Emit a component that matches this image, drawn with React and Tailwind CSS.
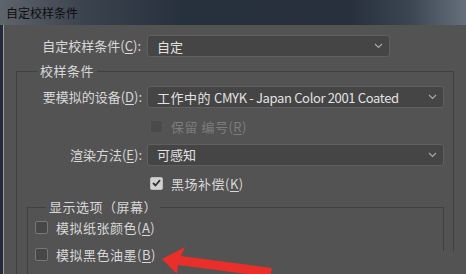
import React from "react";

const font = { fontFamily: '"Noto Sans CJK SC", "Noto Sans", sans-serif' };

function Chevron() {
  return (
    <svg width="9" height="6" viewBox="0 0 9 6" className="shrink-0">
      <polyline points="1,1 4.5,4.5 8,1" fill="none" stroke="#a8a8a8" strokeWidth="1.2" />
    </svg>
  );
}

function Select({ w, h = 22, children }) {
  return (
    <div
      className="flex items-center justify-between rounded-[3px] border border-[#5f5f5f] bg-[#454545] pl-[9px] pr-[6px] text-[13px] text-[#e2e2e2]"
      style={{ width: w, height: h }}
    >
      <span className="whitespace-nowrap leading-none">{children}</span>
      <Chevron />
    </div>
  );
}

function U({ children }) {
  return <span className="underline underline-offset-2">{children}</span>;
}

function Box({ checked, disabled }) {
  return (
    <div
      className={
        "flex h-[13px] w-[13px] shrink-0 items-center justify-center rounded-[2px] border " +
        (checked
          ? "border-[#bdbdbd] bg-[#d2d2d2]"
          : disabled
          ? "border-[#555555] bg-[#4a4a4a]"
          : "border-[#777777] bg-[#474747]")
      }
    >
      {checked && (
        <svg width="9" height="8" viewBox="0 0 9 8">
          <polyline points="1,4 3.5,6.5 8,1.2" fill="none" stroke="#333333" strokeWidth="1.8" />
        </svg>
      )}
    </div>
  );
}

export default function App() {
  return (
    <div className="relative h-[274px] w-[466px] overflow-hidden bg-[#232c38]" style={font}>
      {/* title bar */}
      <div className="flex h-[25px] items-center bg-[linear-gradient(to_right,#5e646c_0%,#3b434e_18%,#27303d_40%,#27303c_75%,#3c4653_88%,#66707b_100%)] pl-[6px]">
        <span className="text-[12px] leading-none text-[#0d0d0d]">自定校样条件</span>
      </div>
      <div className="flex h-[249px]">
        <div className="w-[3px] bg-[#222b37]" />
        <div className="flex flex-1 flex-col">
          <div className="h-[1px] bg-[#c4c8cc]" />
          <div className="flex flex-1">
            <div className="w-[1px] bg-[#9a9ea3]" />
            <div className="flex flex-1 flex-col bg-[#535353] pt-[10px] text-[13px] text-[#d8d8d8]">
              {/* Row 1 */}
              <div className="flex items-center">
                <div className="w-[138px] pr-[1px] text-right whitespace-nowrap">
                  自定校样条件(<U>C</U>):
                </div>
                <div className="ml-[5px]">
                  <Select w={243}>自定</Select>
                </div>
              </div>

              {/* outer group */}
              <fieldset className="ml-[12px] mt-[5px] w-[438px] border border-[#404040] pb-[30px]">
                <legend className="ml-[20px] px-[3px] leading-[18px] tracking-[0.5px]">校样条件</legend>
                <div className="mt-[6px] flex items-center">
                  <div className="w-[125px] text-right whitespace-nowrap">
                    要模拟的设备(<U>D</U>):
                  </div>
                  <div className="ml-[5px]">
                    <Select w={297} h={22}>
                      <span className="tracking-[0.5px]">工作中的</span>{" "}
                      <span className="tracking-[-0.35px]">CMYK - Japan Color 2001 Coated</span>
                    </Select>
                  </div>
                </div>
                <div className="mt-[9px] flex items-center pl-[133px] text-[#7c7c7c]">
                  <Box disabled />
                  <span className="ml-[8px] whitespace-nowrap tracking-[0.5px]">保留 编号(<U>R</U>)</span>
                </div>
                <div className="mt-[7px] flex items-center">
                  <div className="w-[125px] text-right whitespace-nowrap">
                    渲染方法(<U>E</U>):
                  </div>
                  <div className="ml-[5px]">
                    <Select w={297}>可感知</Select>
                  </div>
                </div>
                <div className="mt-[8px] flex items-center pl-[133px]">
                  <Box checked />
                  <span className="ml-[8px] whitespace-nowrap tracking-[0.5px]">黑场补偿(<U>K</U>)</span>
                </div>

                {/* inner group */}
                <fieldset className="ml-[10px] mt-[5px] w-[417px] border border-[#404040] pb-[20px]">
                  <legend className="ml-[18px] px-[3px] leading-[18px] tracking-[0.5px]">显示选项（屏幕）</legend>
                  <div className="mt-[2px] flex items-center pl-[7px]">
                    <Box />
                    <span className="ml-[8px] whitespace-nowrap tracking-[0.5px]">模拟纸张颜色(<U>A</U>)</span>
                  </div>
                  <div className="mt-[7px] flex items-center pl-[7px]">
                    <Box />
                    <span className="ml-[8px] whitespace-nowrap tracking-[0.5px]">模拟黑色油墨(<U>B</U>)</span>
                  </div>
                </fieldset>
              </fieldset>
            </div>
          </div>
        </div>
      </div>

      {/* cover the cut-off lower right */}
      <div className="absolute left-[240px] top-[251px] h-[23px] w-[226px] bg-[#535353]" />

      {/* red arrow annotation */}
      <svg className="absolute left-0 top-0" width="466" height="274" viewBox="0 0 466 274">
        <polygon points="162,259 185,247 181,256 272,268 270,277 178,265 177,274" fill="#ea2e2a" />
      </svg>
    </div>
  );
}
